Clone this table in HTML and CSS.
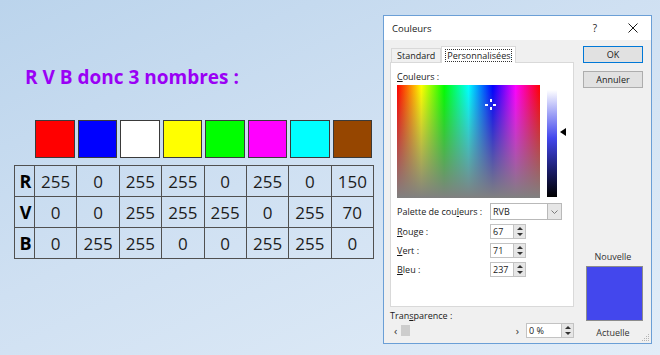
FILE: index.html
```html
<!DOCTYPE html>
<html lang="fr">
<head>
<meta charset="utf-8">
<title>RVB</title>
<link rel="stylesheet" href="styles.css">
</head>
<body>
<div class="page">
  <section class="slide">
    <h1 class="title">R V B donc 3 nombres :</h1>
    <div class="swatches">
      <span class="sw c-red"></span>
      <span class="sw c-blue"></span>
      <span class="sw c-white"></span>
      <span class="sw c-yellow"></span>
      <span class="sw c-green"></span>
      <span class="sw c-magenta"></span>
      <span class="sw c-cyan"></span>
      <span class="sw c-brown"></span>
    </div>
    <table class="rvb">
      <tr><th>R</th><td>255</td><td>0</td><td>255</td><td>255</td><td>0</td><td>255</td><td>0</td><td>150</td></tr>
      <tr><th>V</th><td>0</td><td>0</td><td>255</td><td>255</td><td>255</td><td>0</td><td>255</td><td>70</td></tr>
      <tr><th>B</th><td>0</td><td>255</td><td>255</td><td>0</td><td>0</td><td>255</td><td>255</td><td>0</td></tr>
    </table>
  </section>

  <div class="dialog">
    <div class="titlebar">
      <span class="ttl">Couleurs</span>
      <span class="help">?</span>
      <span class="close">
        <svg width="10" height="10" viewBox="0 0 10 10"><path d="M0.5 0.5 L9.5 9.5 M9.5 0.5 L0.5 9.5" stroke="#1a1a1a" stroke-width="1" fill="none"/></svg>
      </span>
    </div>
    <div class="dbody">
      <div class="leftcol">
        <div class="tabs">
          <span class="tab">Standard</span>
          <span class="tab active"><span class="focus">Personnalisées</span></span>
        </div>
        <div class="panel">
          <div class="lbl"><u>C</u>ouleurs :</div>
          <div class="picker">
            <div class="spectrum">
              <span class="cross">
                <span class="ch ch-l"></span><span class="ch ch-r"></span>
                <span class="cv cv-t"></span><span class="cv cv-b"></span>
              </span>
            </div>
            <div class="lum"></div>
            <span class="arrow"></span>
          </div>
          <div class="row row-sel">
            <span class="rlabel">Palette de cou<u>l</u>eurs :</span>
            <div class="select"><span class="selval">RVB</span><span class="dd"><svg width="7" height="4" viewBox="0 0 7 4"><path d="M0.5 0.5 L3.5 3.5 L6.5 0.5" stroke="#7a7a7a" fill="none"/></svg></span></div>
          </div>
          <div class="row">
            <span class="rlabel"><u>R</u>ouge :</span>
            <div class="spin"><span class="val">67</span><span class="btns"><span class="up"></span><span class="down"></span></span></div>
          </div>
          <div class="row">
            <span class="rlabel"><u>V</u>ert :</span>
            <div class="spin"><span class="val">71</span><span class="btns"><span class="up"></span><span class="down"></span></span></div>
          </div>
          <div class="row">
            <span class="rlabel"><u>B</u>leu :</span>
            <div class="spin"><span class="val">237</span><span class="btns"><span class="up"></span><span class="down"></span></span></div>
          </div>
        </div>
        <div class="trans-label">Tran<u>s</u>parence :</div>
        <div class="trans-row">
          <div class="scroll"><span class="lt">&lsaquo;</span><span class="thumb"></span><span class="gt">&rsaquo;</span></div>
          <div class="spin pct"><span class="val">0 %</span><span class="btns"><span class="up"></span><span class="down"></span></span></div>
        </div>
      </div>
      <div class="rightcol">
        <div class="btn default">OK</div>
        <div class="btn">Annuler</div>
        <div class="plabel plabel-new">Nouvelle</div>
        <div class="preview"></div>
        <div class="plabel plabel-cur">Actuelle</div>
      </div>
    </div>
    <svg class="grip" width="9" height="9" viewBox="0 0 9 9">
      <g fill="#b4b4b4"><rect x="7" y="1" width="1" height="1"/><rect x="5" y="3" width="1" height="1"/><rect x="7" y="3" width="1" height="1"/><rect x="3" y="5" width="1" height="1"/><rect x="5" y="5" width="1" height="1"/><rect x="7" y="5" width="1" height="1"/><rect x="1" y="7" width="1" height="1"/><rect x="3" y="7" width="1" height="1"/><rect x="5" y="7" width="1" height="1"/><rect x="7" y="7" width="1" height="1"/></g>
    </svg>
  </div>
</div>
</body>
</html>
```

FILE: styles.css
```css
* { box-sizing: border-box; margin: 0; padding: 0; }
html, body { width: 660px; height: 355px; overflow: hidden; }
body {
  background: linear-gradient(155deg, #bbd4ec 0%, #cfe0f2 45%, #e2edf8 100%);
  font-family: "Open Sans", sans-serif;
}
.page { display: flex; height: 355px; }

/* ---------- slide ---------- */
.slide { width: 383px; padding-left: 14px; }
.title {
  font: 700 19px/24px "Open Sans", sans-serif;
  color: #9a00f5;
  margin: 65px 0 0 11px;
}
.swatches {
  display: grid;
  grid-template-columns: repeat(8, 1fr);
  width: 340px;
  margin: 31px 0 0 20px;
  height: 38px;
}
.sw { border: 1px solid #3a3a3a; margin: 0 2px 0 1px; }
.c-red { background: #ff0000; }
.c-blue { background: #0000ff; }
.c-white { background: #ffffff; }
.c-yellow { background: #ffff00; }
.c-green { background: #00ff00; }
.c-magenta { background: #ff00ff; }
.c-cyan { background: #00ffff; }
.c-brown { background: #964600; }

.rvb {
  margin-top: 7px;
  width: 360px;
  border-collapse: collapse;
  table-layout: fixed;
}
.rvb th, .rvb td {
  border: 1px solid #505050;
  height: 31px;
  text-align: center;
  vertical-align: middle;
}
.rvb th {
  width: 20px;
  font: 700 18px/1 "Open Sans", sans-serif;
  color: #000;
  padding-left: 2px;
}
.rvb td {
  font: 400 17px/1 "Open Sans", sans-serif;
  color: #1c1c1c;
}

/* ---------- dialog ---------- */
.dialog {
  position: relative;
  width: 269px;
  height: 329px;
  margin-top: 15px;
  background: #f0f0f0;
  border: 1px solid #6b9fd6;
  font: 400 9px/13px "Open Sans", sans-serif;
  color: #1a1a1a;
}
.titlebar {
  display: flex;
  align-items: center;
  height: 24px;
  background: #ffffff;
  padding: 0 13px 0 8px;
  font-size: 9.5px;
}
.ttl { flex: 1; }
.help { width: 10px; margin-right: 28px; text-align: center; font-size: 10px; }
.close { display: flex; width: 10px; height: 10px; }

.dbody { display: flex; gap: 9px; padding: 6px 0 0 6px; }
.leftcol { width: 184px; }
.rightcol { width: 60px; }

.tabs { display: flex; align-items: flex-end; height: 16px; padding-left: 1px; }
.tab {
  height: 14px;
  padding: 0 5px;
  border: 1px solid #d9d9d9;
  border-bottom: none;
  background: #f0f0f0;
  line-height: 13px;
}
.tab.active {
  height: 17px;
  margin-bottom: -1px;
  background: #ffffff;
  padding: 2px 3px 0;
  position: relative;
  z-index: 1;
}
.focus { display: block; border: 1px dotted #333; padding: 0 1px; line-height: 11px; }

.panel {
  height: 245px;
  background: #ffffff;
  border: 1px solid #d9d9d9;
  padding: 7px 0 0 6px;
}
.lbl { line-height: 13px; }
.picker { display: flex; align-items: flex-start; margin-top: 2px; }
.spectrum {
  position: relative;
  width: 143px;
  height: 113px;
  background:
    linear-gradient(to bottom, rgba(128,128,128,0) 0%, rgba(128,128,128,0.55) 55%, #808080 100%),
    linear-gradient(to right, #ff0000 0%, #ffff00 17%, #00ff00 33%, #00ffff 50%, #0000ff 67%, #ff00ff 83%, #ff0000 100%);
}
.cross { position: absolute; left: 88px; top: 14px; width: 11px; height: 11px; }
.ch, .cv { position: absolute; background: #ffffff; }
.ch { height: 2px; width: 3px; top: 5px; }
.ch-l { left: 0; }
.ch-r { right: 0; }
.cv { width: 2px; height: 3px; left: 5px; }
.cv-t { top: 0; }
.cv-b { bottom: 0; }
.lum {
  width: 10px;
  height: 107px;
  margin: 5px 0 0 7px;
  background: linear-gradient(to bottom, #ffffff 0%, #a0a3f6 22%, #4347ed 45%, #1b1d6a 75%, #000000 100%);
}
.arrow {
  width: 0; height: 0;
  margin: 43px 0 0 3px;
  border-top: 4px solid transparent;
  border-bottom: 4px solid transparent;
  border-right: 6px solid #000;
}

.row { display: flex; align-items: center; margin-top: 4px; height: 15px; }
.row-sel { margin-top: 5px; height: 17px; }
.rlabel { width: 93px; }
.select {
  display: flex;
  width: 72px;
  height: 17px;
  background: #fff;
  border: 1px solid #b9b9b9;
}
.selval { flex: 1; padding-left: 2px; line-height: 15px; }
.dd {
  width: 14px;
  display: flex; align-items: center; justify-content: center;
  background: #e6e6e6;
  border-left: 1px solid #b9b9b9;
}
.spin { display: flex; height: 15px; }
.val {
  width: 24px;
  background: #fff;
  border: 1px solid #c3c3c3;
  padding-left: 2px;
  line-height: 13px;
}
.btns {
  width: 12px;
  display: flex; flex-direction: column; justify-content: space-evenly; align-items: center;
  background: #e6e6e6;
  border: 1px solid #c3c3c3;
  border-left: none;
}
.up, .down { width: 0; height: 0; border-left: 3px solid transparent; border-right: 3px solid transparent; }
.up { border-bottom: 3px solid #333; }
.down { border-top: 3px solid #333; }

.trans-label { margin-top: 2px; line-height: 13px; }
.trans-row { display: flex; margin-top: 1px; height: 15px; }
.scroll { display: flex; align-items: center; width: 137px; padding-left: 4px; }
.lt, .gt { font-size: 11px; line-height: 15px; color: #333; }
.thumb { width: 9px; height: 11px; background: #cdcdcd; margin-left: 4px; }
.gt { margin-left: auto; margin-right: 7px; }
.pct .val { width: 36px; }

.btn {
  height: 17px;
  border: 1px solid #adadad;
  background: #e1e1e1;
  text-align: center;
  line-height: 15px;
  font-size: 9px;
}
.btn.default { border-color: #0078d7; margin-bottom: 8px; }
.plabel { text-align: center; line-height: 13px; color: #333; }
.plabel-new { margin-top: 162px; }
.preview {
  width: 57px;
  height: 55px;
  margin: 3px 0 0 3px;
  background: #4347ed;
  border: 1px solid #8c8c8c;
}
.plabel-cur { margin-top: 5px; }
.grip { position: absolute; right: 1px; bottom: 1px; }
```
